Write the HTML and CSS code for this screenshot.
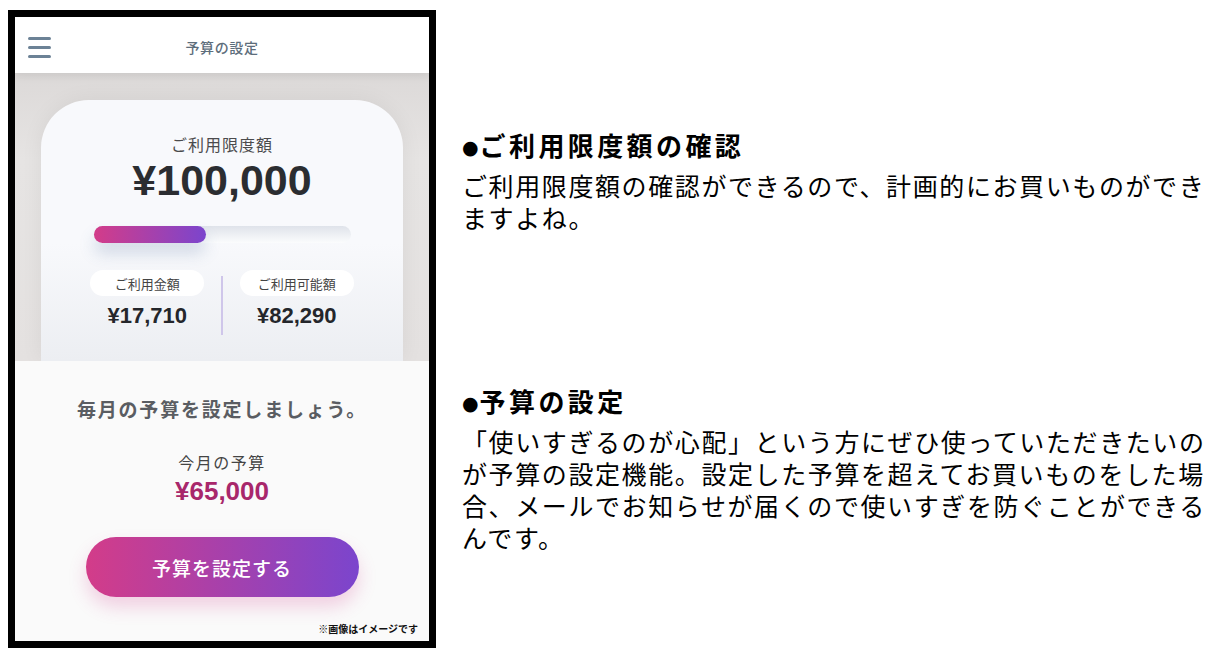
FILE: index.html
```html
<!DOCTYPE html>
<html lang="ja">
<head>
    <meta charset="UTF-8">
    <meta name="viewport" content="width=device-width, initial-scale=1.0">
    <title>予算の設定</title>
    <link rel="stylesheet" href="styles.css">
</head>
<body>
    <div class="page">
        <div class="phone">
            <header class="app-bar">
                <div class="menu">
                    <span></span>
                    <span></span>
                    <span></span>
                </div>
                <div class="app-title">予算の設定</div>
                <div></div>
            </header>

            <section class="limit-area">
                <div class="limit-card">
                    <p class="limit-label">ご利用限度額</p>
                    <p class="limit-amount">¥100,000</p>
                    <div class="bar">
                        <div class="bar-fill" style="width: 43.6%"></div>
                    </div>
                    <div class="stats">
                        <div class="stat">
                            <span class="pill">ご利用金額</span>
                            <span class="stat-value">¥17,710</span>
                        </div>
                        <div class="stat-divider"></div>
                        <div class="stat">
                            <span class="pill">ご利用可能額</span>
                            <span class="stat-value">¥82,290</span>
                        </div>
                    </div>
                </div>
            </section>

            <section class="budget">
                <p class="budget-lead">毎月の予算を設定しましょう。</p>
                <p class="budget-label">今月の予算</p>
                <p class="budget-amount">¥65,000</p>
                <button class="budget-btn">予算を設定する</button>
                <p class="image-note">※画像はイメージです</p>
            </section>
        </div>

        <div class="notes">
            <div class="note-block">
                <h2><span class="dot">●</span>ご利用限度額の確認</h2>
                <p>ご利用限度額の確認ができるので、計画的にお買いものができますよね。</p>
            </div>
            <div class="note-block">
                <h2><span class="dot">●</span>予算の設定</h2>
                <p>「使いすぎるのが心配」という方にぜひ使っていただきたいのが予算の設定機能。設定した予算を超えてお買いものをした場合、メールでお知らせが届くので使いすぎを防ぐことができるんです。</p>
            </div>
        </div>
    </div>
</body>
</html>
```

FILE: styles.css
```css
:root {
    --jp-font: "Noto Sans CJK JP", sans-serif;
    --num-font: "Liberation Sans", "Noto Sans CJK JP", sans-serif;
    --pink: #d33c89;
    --violet: #7b45cd;
}

* {
    margin: 0;
    padding: 0;
    box-sizing: border-box;
}

body {
    background-color: #ffffff;
    font-family: var(--jp-font);
    color: #000;
}

.page {
    display: flex;
    align-items: flex-start;
    padding: 10px 0 0 8px;
}

/* phone mock */
.phone {
    width: 428px;
    height: 638px;
    border: 7px solid #000;
    display: flex;
    flex-direction: column;
    overflow: hidden;
    flex-shrink: 0;
}

.app-bar {
    height: 56px;
    background-color: #fff;
    display: grid;
    grid-template-columns: 1fr auto 1fr;
    align-items: center;
    padding: 4px 13px 0;
    position: relative;
    z-index: 2;
    box-shadow: 0 3px 8px rgba(0, 0, 0, 0.08);
}

.menu {
    display: flex;
    flex-direction: column;
    gap: 6px;
    width: 23px;
}

.menu span {
    display: block;
    height: 3px;
    border-radius: 2px;
    background-color: #6c8296;
}

.app-title {
    font-size: 14px;
    font-weight: 500;
    letter-spacing: 0.6px;
    color: #5d6d7b;
}

.limit-area {
    height: 288px;
    padding: 27px 26px 0;
    background: linear-gradient(#dcd9d8, #e6e4e3 30%, #e4e1e0);
}

.limit-card {
    height: 261px;
    border-radius: 48px 48px 0 0;
    background: linear-gradient(#f8f9fc 55%, #eceef2);
    box-shadow: 0 0 22px rgba(0, 0, 0, 0.06);
    padding-top: 33px;
    display: flex;
    flex-direction: column;
    align-items: center;
}

.limit-label {
    font-size: 16px;
    line-height: 22px;
    letter-spacing: 1px;
    color: #4b4b4d;
}

.limit-amount {
    margin-top: 3px;
    font-family: var(--num-font);
    font-size: 43px;
    line-height: 44px;
    font-weight: bold;
    color: #2b2d31;
}

.bar {
    margin-top: 24px;
    width: 257px;
    height: 17px;
    border-radius: 9px;
    background: linear-gradient(#dfe3ea, #fbfcfd);
}

.bar-fill {
    height: 100%;
    border-radius: 9px;
    background: linear-gradient(90deg, var(--pink), var(--violet));
    box-shadow: 0 10px 16px rgba(70, 100, 150, 0.22);
}

.stats {
    margin-top: 27px;
    display: flex;
    align-items: flex-start;
}

.stat {
    width: 148px;
    display: flex;
    flex-direction: column;
    align-items: center;
}

.pill {
    width: 114px;
    height: 26px;
    border-radius: 13px;
    background-color: #fff;
    display: flex;
    align-items: center;
    justify-content: center;
    font-size: 13px;
    color: #444;
}

.stat-value {
    margin-top: 6px;
    font-family: var(--num-font);
    font-size: 22px;
    line-height: 28px;
    font-weight: bold;
    color: #24262b;
}

.stat-divider {
    width: 1.5px;
    height: 59px;
    margin-top: 6px;
    background-color: #cfc6ea;
}

.budget {
    flex: 1;
    background-color: #fafafa;
    display: flex;
    flex-direction: column;
    align-items: center;
    padding-top: 34px;
}

.budget-lead {
    font-size: 19px;
    line-height: 28px;
    font-weight: bold;
    letter-spacing: 1.8px;
    color: #5a5d62;
}

.budget-label {
    margin-top: 28px;
    font-size: 16px;
    line-height: 22px;
    letter-spacing: 1.5px;
    color: #444;
}

.budget-amount {
    margin-top: 3px;
    font-family: var(--num-font);
    font-size: 26px;
    line-height: 30px;
    font-weight: bold;
    color: #a8276b;
}

.budget-btn {
    margin-top: 31px;
    width: 273px;
    height: 60px;
    border: none;
    border-radius: 30px;
    background: linear-gradient(90deg, var(--pink), var(--violet));
    box-shadow: 0 10px 18px rgba(210, 60, 140, 0.22);
    color: #fff;
    font-family: var(--jp-font);
    font-size: 19px;
    font-weight: 500;
    letter-spacing: 1px;
    cursor: pointer;
}

.image-note {
    align-self: flex-end;
    margin-top: 25px;
    padding-right: 11px;
    font-size: 10px;
    line-height: 14px;
    font-weight: bold;
    color: #111;
}

/* explanation column */
.notes {
    width: 750px;
    margin-left: 26px;
    padding-top: 119px;
}

.note-block + .note-block {
    margin-top: 152px;
}

.note-block h2 {
    font-size: 26px;
    line-height: 32px;
    font-weight: bold;
    letter-spacing: 3.4px;
}

.dot {
    font-family: "DejaVu Sans", sans-serif;
    font-size: 19px;
    line-height: 0;
    letter-spacing: 1px;
    vertical-align: 2px;
}

.note-block p {
    margin-top: 8px;
    font-size: 25px;
    line-height: 32px;
    letter-spacing: 1.6px;
}
```
